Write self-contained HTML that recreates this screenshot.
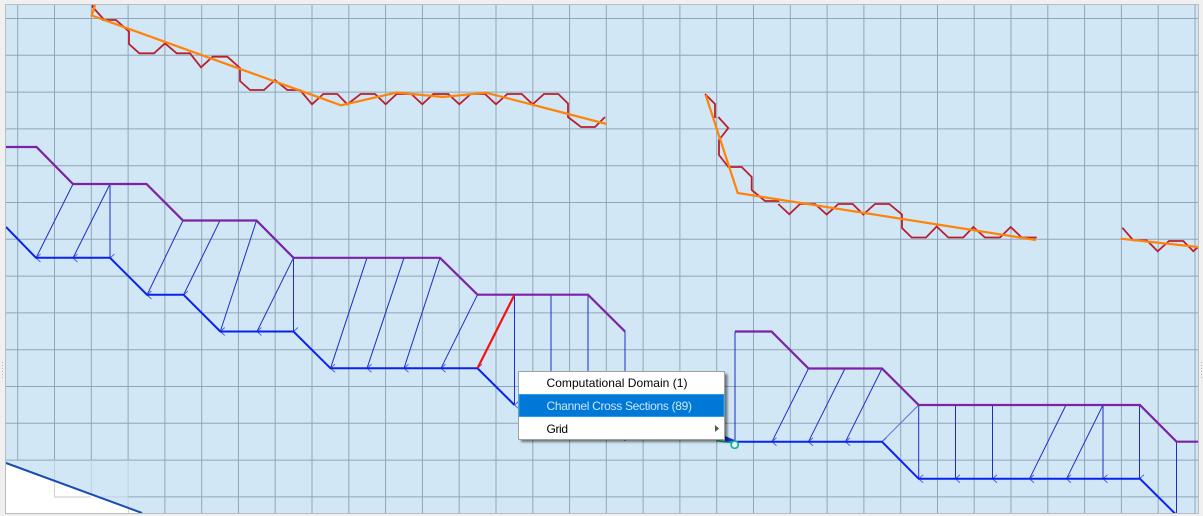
<!DOCTYPE html>
<html>
<head>
<meta charset="utf-8">
<style>
html,body{margin:0;padding:0;background:#f0f0f0;width:1203px;height:516px;overflow:hidden}
svg{position:absolute;left:0;top:0;display:block}
</style>
</head>
<body>
<svg width="1203" height="516" viewBox="0 0 1203 516" xmlns="http://www.w3.org/2000/svg">
<defs>
<clipPath id="c"><rect x="6" y="5" width="1192" height="508"/></clipPath>
<filter id="s" x="-5%" y="-10%" width="112%" height="125%"><feGaussianBlur stdDeviation="1.3"/></filter>
</defs>
<rect x="0" y="0" width="1203" height="516" fill="#f0f0f0"/>
<rect x="5.5" y="4.5" width="1193" height="509" fill="#d2e7f6" stroke="#bcbcbc"/>
<g clip-path="url(#c)">
<!-- grid -->
<g stroke="#90a6b6" stroke-width="1" fill="none">
<path d="M6 18.500H1198M6 55.300H1198M6 92.100H1198M6 128.900H1198M6 165.700H1198M6 202.500H1198M6 239.300H1198M6 276.100H1198M6 312.900H1198M6 349.700H1198M6 386.500H1198M6 423.300H1198M6 460.100H1198M128 496.900H1198"/>
<path d="M17.700 5V460M54.500 5V460M91.300 5V460M128.100 5V460M164.900 5V513M201.700 5V513M238.400 5V513M275.200 5V513M312 5V513M348.800 5V513M385.600 5V513M422.400 5V513M459.200 5V513M496 5V513M532.800 5V513M569.600 5V513M606.300 5V513M643.100 5V513M679.900 5V513M716.700 5V513M753.500 5V513M790.300 5V513M827.100 5V513M863.900 5V513M900.700 5V513M937.500 5V513M974.200 5V513M1011 5V513M1047.800 5V513M1084.600 5V513M1121.400 5V513M1158.200 5V513M1195 5V513"/>
</g>
<path d="M54.500 460V481M91.300 460V494M128.100 460V508M91 496.900H128" stroke="#bdd0de" stroke-width="1" fill="none"/>
<!-- white region -->
<polygon points="6,463 142,513 6,513" fill="#fff"/>
<path d="M54.500 481V497H91" stroke="#d4d4d4" stroke-width="1.200" fill="none"/>
<path d="M128.500 508V513" stroke="#d4d4d4" stroke-width="1" fill="none"/>
<path d="M6 463L142 513" stroke="#1a4db0" stroke-width="2" fill="none"/>
<!-- connectors -->
<g stroke="#1c2fc4" stroke-width="1" fill="none">
<path d="M73 184L36 258M110 184L73 258M110 184V258M183 220.500L147 295M220 220.500L183.500 295M256.500 220.500L220.300 331.500M293.500 257.800L257 331.500M293.500 257.800V331.500M367 257.800L330.500 368.300M404 257.800L367 368.300M440 257.800L404 368.300M477.500 294.700L441 368.300M514.500 294.700V405M551 294.700V405M588 294.700V405M625 331.500V441M735 331.500V441.700M808.500 368.500L772 441.700M845 368.500L808.500 441.700M882 368.500L845.500 441.700M918.700 405V478.800M955.500 405V478.800M992.500 405V478.800M1066 405L1029.500 478.800M1103 405L1066.500 478.800M1103 405V478.800M1139.500 405V478.800M1176.500 441.700V515"/>
<path d="M918.700 405L882 441.700" stroke="#5a6fd8"/>
</g>
<!-- arrowheads -->
<path d="M40.500 254L36 258L40.500 262M77.500 254L73 258L77.500 262M114.500 254L110 258L114.500 262M151.500 291L147 295L151.500 299M188 291L183.500 295L188 299M224.800 327.500L220.300 331.500L224.800 335.500M261.500 327.500L257 331.500L261.500 335.500M298 327.500L293.500 331.500L298 335.500M335 364.300L330.500 368.300L335 372.300M371.500 364.300L367 368.300L371.500 372.300M408.500 364.300L404 368.300L408.500 372.300M445.500 364.300L441 368.300L445.500 372.300M482 364.300L477.500 368.300L482 372.300M519 401L514.500 405L519 409M776.500 437.700L772 441.700L776.500 445.700M813 437.700L808.500 441.700L813 445.700M850 437.700L845.500 441.700L850 445.700M886.500 437.700L882 441.700L886.500 445.700M923.200 474.800L918.700 478.800L923.200 482.800M960 474.800L955.500 478.800L960 482.800M997 474.800L992.500 478.800L997 482.800M1034 474.800L1029.500 478.800L1034 482.800M1071 474.800L1066.500 478.800L1071 482.800M1107.500 474.800L1103 478.800L1107.500 482.800M1144 474.800L1139.500 478.800L1144 482.800" stroke="#4f64f2" stroke-width="1" fill="none"/>
<!-- blue bottom -->
<g stroke="#0a22ee" stroke-width="2" fill="none" stroke-linejoin="miter">
<path d="M6 227L36 257.800H110L147 294.700H183.500L220.300 331.500H293.500L330.500 368.300H477.500L514.500 405"/>
<path d="M735 441.700H882L918.700 478.800H1140L1176.500 515"/>
</g>
<!-- red selected -->
<path d="M514.500 294.700L477.500 368.300" stroke="#f81010" stroke-width="2.200" fill="none"/>
<!-- purple -->
<g stroke="#7b22a6" stroke-width="2.200" fill="none">
<path d="M6 147H36.500L73 184H146.500L183 220.500H256.500L293.500 257.800H440L477.500 294.700H588L625 331.500"/>
<path d="M735 331.500H771.500L808.500 368.500H882L918.700 405H1140L1176.500 441.700H1198"/>
</g>
<!-- dark red -->
<g stroke="#b9202f" stroke-width="1.800" fill="none">
<path d="M92.700 5V7L103 18.500V20H116L129 31.500V44L139.300 53.300H154L165 43.300L176.700 53.300H190L201 67.300L212.700 56.700H227.300L240 68V81L250 90H264L275 80L287.300 90H300L312 104.300L323.300 94H337.300L347.300 104.300L360.700 94H375L385.700 104.300L396.700 94H411.300L422.300 104.300L433.300 94H448.300L459.300 104.300L470.700 94H485L496 104.300L507.300 94H521.700L532.700 104.300L544 94H558.300L568 103.500V117L581 127H595L605 117"/>
<path d="M705 94L715 104V118M718.300 117L728.300 128L719 140V155L728.300 167H741.700L751.700 177V190L765 201H779.300M778.300 204L789.300 214.300L800 204H815L826.700 214.500L838.300 204H852.700L863.300 214.500L875 204H889.300L902 214.500V228L911.700 237.500H926L936.700 226.500L948.300 237.500H963.300L973.300 227L985 237.500H1000L1010.700 227L1021.700 237.500H1036.700"/>
<path d="M1122.300 227.700L1133.300 240.300H1146.700L1157.700 251.300L1169 241H1183.300L1193.300 251.300L1198 247"/>
</g>
<!-- orange -->
<g stroke="#ff8308" stroke-width="2.200" fill="none">
<path d="M95 5L91.700 15.500L341 105.300L396.700 92.500L442.700 97L486 92.700L606.700 124"/>
<path d="M705.700 95L737.700 193L1036 240"/>
<path d="M1120.700 238.700L1198 247"/>
</g>
<!-- snap marker -->
<path d="M725 436L737 441L725 442Z" fill="#1a2fd0"/>
<path d="M716.700 440.800L732 442.700" stroke="#0fa585" stroke-width="1.500" fill="none"/>
<circle cx="734.700" cy="444.700" r="3.600" fill="#eef9f7" stroke="#10b59a" stroke-width="1.700"/>
</g>
<!-- side grips -->
<g fill="#b4b4b4">
<rect x="2" y="362" width="1" height="1"/><rect x="2" y="365" width="1" height="1"/><rect x="2" y="368" width="1" height="1"/><rect x="2" y="371" width="1" height="1"/><rect x="2" y="374" width="1" height="1"/><rect x="2" y="377" width="1" height="1"/>
<rect x="1201" y="362" width="1" height="1"/><rect x="1201" y="365" width="1" height="1"/><rect x="1201" y="368" width="1" height="1"/><rect x="1201" y="371" width="1" height="1"/><rect x="1201" y="374" width="1" height="1"/><rect x="1201" y="377" width="1" height="1"/>
</g>
<!-- menu -->
<rect x="521" y="374" width="206.500" height="68" fill="#000" opacity=".5" filter="url(#s)"/>
<rect x="518.500" y="371.500" width="206" height="68" fill="#fff" stroke="#a0a0a0"/>
<rect x="519" y="394.500" width="205" height="22" fill="#0078d7" stroke="#26a0f0"/>
<g font-family="'Liberation Sans',sans-serif" font-size="12">
<text x="546.500" y="387" fill="#000" textLength="141" lengthAdjust="spacing">Computational Domain (1)</text>
<text x="546.500" y="410" fill="#cfe7f8" textLength="145.500" lengthAdjust="spacing">Channel Cross Sections (89)</text>
<text x="546.500" y="433" fill="#000" textLength="21.500" lengthAdjust="spacing">Grid</text>
</g>
<path d="M715 425L719 428.500L715 432Z" fill="#555"/>
</svg>
</body>
</html>
